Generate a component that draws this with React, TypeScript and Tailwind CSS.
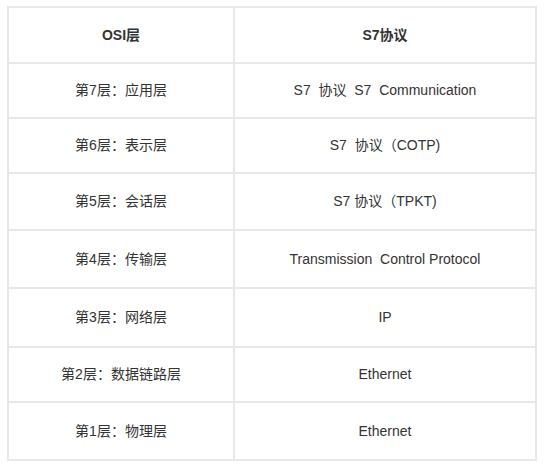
const rows: [string, string][] = [
  ["第7层：应用层", "S7  协议  S7  Communication"],
  ["第6层：表示层", "S7  协议（COTP)"],
  ["第5层：会话层", "S7 协议（TPKT)"],
  ["第4层：传输层", "Transmission  Control Protocol"],
  ["第3层：网络层", "IP"],
  ["第2层：数据链路层", "Ethernet"],
  ["第1层：物理层", "Ethernet"],
];

const heights = ["h-[55px]", "h-[55px]", "h-[57px]", "h-[58px]", "h-[59px]", "h-[55px]", "h-[58px]"];

const App = () => {
  return (
    <div
      className="w-[545px] h-[468px] bg-white pt-[6px] pl-[7px]"
      style={{ fontFamily: '"Liberation Sans", "Noto Sans CJK SC", sans-serif' }}
    >
      <table className="w-[530px] border-collapse text-[14px] text-[#333333]">
        <thead>
          <tr className="h-[56px]">
            <th className="w-[226px] border-2 border-[#e8e8e8] font-bold text-center">OSI层</th>
            <th className="border-2 border-[#e8e8e8] font-bold text-center">S7协议</th>
          </tr>
        </thead>
        <tbody>
          {rows.map(([layer, proto], i) => (
            <tr key={i} className={heights[i]}>
              <td className="border-2 border-[#e8e8e8] text-center">{layer}</td>
              <td className="border-2 border-[#e8e8e8] text-center whitespace-pre">{proto}</td>
            </tr>
          ))}
        </tbody>
      </table>
    </div>
  );
};

export default App;
